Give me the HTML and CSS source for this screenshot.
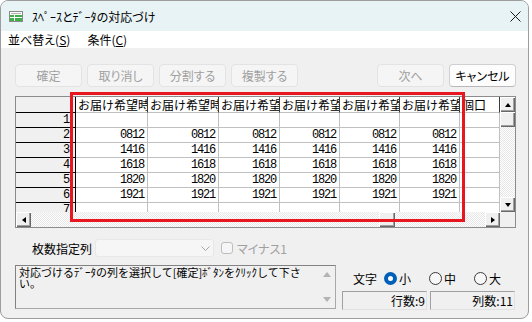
FILE: index.html
```html
<!DOCTYPE html>
<html lang="ja">
  <head>
    <meta charset="utf-8" />
    <title>ｽﾍﾟｰｽとﾃﾞｰﾀの対応づけ</title>
    <link rel="stylesheet" href="styles.css">
  </head>
  <body>
    <div class="window">

      <!--Title bar-->
      <div class="titlebar">
        <svg class="app-icon" viewBox="0 0 14 11">
          <rect x="0.5" y="0.5" width="13" height="10" fill="#fff" stroke="#8a8a8a"/>
          <line x1="2" y1="2.5" x2="12" y2="2.5" stroke="#b5b5b5"/>
          <rect x="1" y="4" width="12" height="2" fill="#3fae49"/>
          <rect x="1" y="7" width="12" height="3" fill="#3fae49"/>
          <line x1="5.5" y1="4" x2="5.5" y2="10" stroke="#fff"/>
          <line x1="1" y1="6.5" x2="13" y2="6.5" stroke="#fff"/>
        </svg>
        <span class="title">ｽﾍﾟｰｽとﾃﾞｰﾀの対応づけ</span>
        <svg class="close" viewBox="0 0 11 11">
          <path d="M0.5 0.5 L10.5 10.5 M10.5 0.5 L0.5 10.5" stroke="#1a1a1a" stroke-width="1"/>
        </svg>
      </div>

      <!--Menu-->
      <div class="menubar">
        <span class="menu">並べ替え(<u>S</u>)</span>
        <span class="menu">条件(<u>C</u>)</span>
      </div>

      <div class="content">

        <!--Buttons-->
        <div class="toolbar">
          <button class="btn" disabled>確定</button>
          <button class="btn" disabled>取り消し</button>
          <button class="btn" disabled>分割する</button>
          <button class="btn" disabled>複製する</button>
          <span class="spacer"></span>
          <button class="btn" disabled>次へ</button>
          <button class="btn default">キャンセル</button>
        </div>

        <!--Data grid-->
        <div class="grid-frame">
          <div class="grid-main">
            <div class="sheet">
              <div class="rowhead"></div>
              <div class="colhead">お届け希望時</div>
              <div class="colhead">お届け希望時</div>
              <div class="colhead">お届け希望時</div>
              <div class="colhead">お届け希望時</div>
              <div class="colhead">お届け希望時</div>
              <div class="colhead">お届け希望時</div>
              <div class="colhead">個口</div>

              <div class="rowhead">1</div>
              <div class="cell"></div><div class="cell"></div><div class="cell"></div><div class="cell"></div><div class="cell"></div><div class="cell"></div><div class="cell"></div>

              <div class="rowhead">2</div>
              <div class="cell">0812</div><div class="cell">0812</div><div class="cell">0812</div><div class="cell">0812</div><div class="cell">0812</div><div class="cell">0812</div><div class="cell"></div>

              <div class="rowhead">3</div>
              <div class="cell">1416</div><div class="cell">1416</div><div class="cell">1416</div><div class="cell">1416</div><div class="cell">1416</div><div class="cell">1416</div><div class="cell"></div>

              <div class="rowhead">4</div>
              <div class="cell">1618</div><div class="cell">1618</div><div class="cell">1618</div><div class="cell">1618</div><div class="cell">1618</div><div class="cell">1618</div><div class="cell"></div>

              <div class="rowhead">5</div>
              <div class="cell">1820</div><div class="cell">1820</div><div class="cell">1820</div><div class="cell">1820</div><div class="cell">1820</div><div class="cell">1820</div><div class="cell"></div>

              <div class="rowhead">6</div>
              <div class="cell">1921</div><div class="cell">1921</div><div class="cell">1921</div><div class="cell">1921</div><div class="cell">1921</div><div class="cell">1921</div><div class="cell"></div>

              <div class="rowhead">7</div>
              <div class="cell"></div><div class="cell"></div><div class="cell"></div><div class="cell"></div><div class="cell"></div><div class="cell"></div><div class="cell"></div>
            </div>
            <div class="hscroll">
              <div class="sbtn"><span class="arrow left"></span></div>
              <div class="track htrack"><div class="thumb hthumb"></div></div>
              <div class="sbtn"><span class="arrow right"></span></div>
            </div>
          </div>
          <div class="vscroll">
            <div class="sbtn"><span class="arrow up"></span></div>
            <div class="thumb vthumb"></div>
            <div class="track vtrack"></div>
            <div class="sbtn"><span class="arrow down"></span></div>
            <div class="corner"></div>
          </div>
        </div>

        <!--Options-->
        <div class="options">
          <span class="opt-label">枚数指定列</span>
          <div class="combo">
            <svg class="chevron" viewBox="0 0 9 5"><polyline points="0.5,0.5 4.5,4.5 8.5,0.5" fill="none" stroke="#a6a6a6"/></svg>
          </div>
          <span class="checkbox"></span>
          <span class="check-label">マイナス1</span>
        </div>

        <div class="bottom">
          <div class="message">
            <div class="message-text">対応づけるﾃﾞｰﾀの列を選択して[確定]ﾎﾞﾀﾝをｸﾘｯｸして下さ<br>い。</div>
            <div class="message-scroll">
              <span class="arrow up gray"></span>
              <span class="arrow down gray"></span>
            </div>
          </div>
          <div class="side">
            <div class="radios">
              <span class="radio-label">文字</span>
              <span class="radio on"></span><span class="radio-text">小</span>
              <span class="radio"></span><span class="radio-text">中</span>
              <span class="radio"></span><span class="radio-text">大</span>
            </div>
            <div class="status">
              <div class="panel">行数:9</div>
              <div class="panel">列数:11</div>
            </div>
          </div>
        </div>
      </div>

      <!--Red highlight drawn over the grid-->
      <div class="highlight"></div>
    </div>
  </body>
</html>
```

FILE: styles.css
```css
* {box-sizing: border-box;}

body {margin: 0;
      background-color: #fff;
      font-family: "Noto Sans CJK JP", sans-serif;
      font-size: 12px;
      color: #000;}

.window {position: relative;
         width: 529px;
         height: 319px;
         border: 1px solid #9d9d9d;
         border-radius: 8px;
         overflow: hidden;
         background-color: #f0f0f0;}

/* title bar */
.titlebar {height: 30px;
           display: flex;
           align-items: center;
           padding-left: 8px;
           background-color: #e8f3f6;}
.app-icon {width: 14px; height: 11px;}
.title {margin-left: 9px;
        font-size: 12px;
        font-feature-settings: "palt";}
.close {width: 11px;
        height: 11px;
        margin-left: auto;
        margin-right: 7px;}

/* menu */
.menubar {height: 17px;
          display: flex;
          align-items: center;
          padding-left: 7px;
          background-color: #fff;
          font-feature-settings: "palt";}
.menu {margin-right: 17px;}

.content {padding: 16px 12px 0 14px;}

/* buttons */
.toolbar {display: flex;
          gap: 5px;
          height: 23px;}
.spacer {flex: 1;}
.btn {width: 67px;
      height: 23px;
      padding: 0;
      font-family: inherit;
      font-size: 12px;
      font-feature-settings: "palt";
      border: 1px solid #e3e3e3;
      border-radius: 4px;
      background-color: #f5f5f5;
      color: #a0a0a0;}
.default {background-color: #fdfdfd;
          border-color: #d0d0d0;
          border-bottom-color: #b8b8b8;
          color: #000;}

/* grid */
.grid-frame {display: flex;
             margin-top: 9px;
             width: 501px;
             height: 132px;
             border: 1px solid #8c8c8c;
             background-color: #fff;}
.grid-main {width: 484px;
            display: flex;
            flex-direction: column;}
.sheet {height: 115px;
        overflow: hidden;
        display: grid;
        grid-template-columns: 60px 72px 71px 61px 60px 60px 60px 40px;
        grid-template-rows: 16px repeat(7, 15px);
        font-family: "Liberation Mono", monospace;
        font-size: 12px;
        letter-spacing: -1.2px;}
.rowhead {background-color: #f0f0f0;
          border-right: 1px solid #000;
          border-bottom: 1px solid #000;
          text-align: right;
          padding-right: 6px;
          line-height: 14px;}
.colhead {font-family: "Noto Sans CJK JP", sans-serif;
          font-size: 12px;
          letter-spacing: 0;
          line-height: 15px;
          padding-left: 2px;
          white-space: nowrap;
          overflow: hidden;
          border-right: 1px solid #3c3c3c;
          border-bottom: 1px solid #c0c0c0;}
.cell {text-align: right;
       padding-right: 3px;
       line-height: 14px;
       border-right: 1px solid #c0c0c0;
       border-bottom: 1px solid #c0c0c0;}

/* scroll bars */
.hscroll {height: 15px;
          display: flex;}
.vscroll {width: 15px;
          display: flex;
          flex-direction: column;}
.sbtn {width: 15px;
       height: 15px;
       flex: none;
       display: flex;
       align-items: center;
       justify-content: center;
       background-color: #f0f0f0;
       box-shadow: inset 1px 1px #fff, inset -1px -1px #696969, inset -2px -2px #a0a0a0;}
.track {flex: 1;
        background-color: #fff;
        background-image: conic-gradient(#e6e6e6 25%, transparent 0 50%, #e6e6e6 0 75%, transparent 0);
        background-size: 2px 2px;}
.htrack {display: flex;}
.thumb {background-color: #f0f0f0;
        box-shadow: inset 1px 1px #fff, inset -1px -1px #696969, inset -2px -2px #a0a0a0;}
.hthumb {width: 16px;
         margin-left: 348px;}
.vthumb {height: 15px; flex: none;}
.corner {height: 15px;
         flex: none;
         background-color: #f0f0f0;}

.arrow {width: 0; height: 0; border: 0 solid transparent;}
.arrow.up {border-width: 0 3.5px 4px; border-bottom-color: #000;}
.arrow.down {border-width: 4px 3.5px 0; border-top-color: #000;}
.arrow.left {border-width: 3.5px 4px 3.5px 0; border-right-color: #000;}
.arrow.right {border-width: 3.5px 0 3.5px 4px; border-left-color: #000;}
.arrow.up.gray {border-width: 0 4px 5px; border-bottom-color: #b3b3b3;}
.arrow.down.gray {border-width: 5px 4px 0; border-top-color: #b3b3b3;}

/* options row */
.options {display: flex;
          align-items: center;
          height: 18px;
          margin-top: 11px;
          font-feature-settings: "palt";}
.opt-label {width: 63px;
            margin-left: 17px;}
.combo {width: 119px;
        height: 18px;
        display: flex;
        align-items: center;
        justify-content: flex-end;
        padding-right: 3px;
        border: 1px solid #e8e8e8;
        border-radius: 3px;
        background-color: #f6f6f6;}
.chevron {width: 9px; height: 5px;}
.checkbox {width: 12px;
           height: 12px;
           margin-left: 7px;
           border: 1px solid #bdbdbd;
           border-radius: 3px;
           background-color: #f6f6f6;}
.check-label {margin-left: 4px;
              color: #a0a0a0;}

/* message + status */
.bottom {display: flex;
         margin-top: 8px;
         gap: 6px;}
.message {width: 321px;
          height: 44px;
          display: flex;
          border: 1px solid;
          border-color: #828282 #a8a8a8 #a8a8a8 #828282;}
.message-text {flex: 1;
               padding: 1px 0 0 3px;
               font-size: 11px;
               line-height: 11px;}
.message-scroll {width: 17px;
                 display: flex;
                 flex-direction: column;
                 align-items: center;
                 justify-content: space-between;
                 padding: 6px 0 6px;}

.side {width: 173px;
       display: flex;
       flex-direction: column;}
.radios {height: 26px;
         display: flex;
         align-items: center;
         padding-left: 11px;
         white-space: nowrap;
         font-feature-settings: "palt";}
.radios span {flex: none;}
.radio-label {margin-right: 7px;}
.radio {width: 13px;
        height: 13px;
        border-radius: 50%;
        border: 1px solid #3a3a3a;
        background-color: #f7f7f7;}
.radio.on {border: 4px solid #005fb8;
           background-color: #fff;}
.radio-text {margin-left: 2px;
             margin-right: 18px;}
.status {display: flex;
         gap: 3px;}
.panel {width: 85px;
        height: 19px;
        text-align: right;
        line-height: 17px;
        padding-right: 1px;
        border: 1px solid;
        border-color: #a0a0a0 #e2e2e2 #e2e2e2 #a0a0a0;}

/* annotation overlay */
.highlight {position: absolute;
            left: 69px;
            top: 91px;
            width: 395px;
            height: 130px;
            border: 3px solid #e8161f;}
```
